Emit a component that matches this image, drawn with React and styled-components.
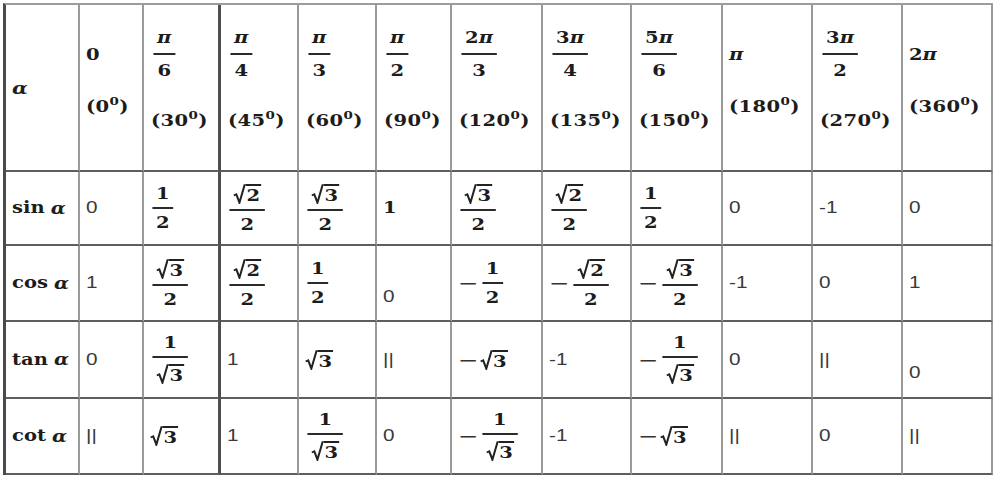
import React from 'react';
import styled, { createGlobalStyle } from 'styled-components';

const GlobalStyle = createGlobalStyle`
  html, body {
    margin: 0;
    padding: 0;
    background: #ffffff;
  }
`;

// column / row sizes measured off the printed table
const COLS = [74, 64, 77, 78, 78, 75, 91, 89, 91, 90, 90, 90];
const ROWS = [167, 74, 76, 77, 76];
const STRETCH = 1.22;

const Table = styled.div`
  display: grid;
  grid-template-columns: ${COLS.map(w => `${w}px`).join(' ')};
  grid-template-rows: ${ROWS.map(h => `${h}px`).join(' ')};
  width: max-content;
  margin: 3px 0 0 3px;
  border-top: 2px solid #9c9c9c;
  border-left: 3px solid #4a4a4a;
  background: #fff;
`;

const Cell = styled.div`
  display: flex;
  align-items: center;
  box-sizing: border-box;
  padding-left: 6px;
  padding-bottom: ${props => (props.$head ? 14 : 0)}px;
  border-right: ${props => (props.$heavy ? '3px solid #4f4f4f' : '2px solid #9a9a9a')};
  border-bottom: 2px solid #5e5e5e;
  color: #1e1e1e;
  overflow: visible;
`;

const Inner = styled.div`
  display: flex;
  flex-direction: ${props => (props.$stack ? 'column' : 'row')};
  align-items: ${props => (props.$stack ? 'flex-start' : 'center')};
  gap: ${props => (props.$stack ? '32px' : '0')};
  margin-top: ${props => (props.$shift || 0) * 2}px;
  margin-left: ${props => props.$indent || 0}px;
  transform: scaleX(${STRETCH});
  transform-origin: left center;
  white-space: nowrap;
`;

const Serif = styled.span`
  font-family: "DejaVu Serif", "Liberation Serif", serif;
  font-weight: bold;
  font-size: 16px;
  line-height: 20px;
  color: #1c1c1c;
`;

const Label = styled(Serif)`
  font-size: 16px;
`;

const Greek = styled.i`
  font-family: "DejaVu Serif", "Liberation Serif", serif;
  font-style: italic;
  font-weight: bold;
  font-size: ${props => props.$size || 16}px;
  margin-left: ${props => props.$gap || 0}px;
`;

const Sans = styled.span`
  font-family: "Liberation Sans", Arial, sans-serif;
  font-size: 17px;
  line-height: 20px;
  color: #3a3a3a;
`;

const Deg = styled(Serif)`
  font-size: 16px;
  letter-spacing: 0.3px;
`;

const Sup = styled.sup`
  font-size: 11px;
  line-height: 0;
  vertical-align: 7px;
`;

const FracBox = styled.span`
  display: inline-flex;
  flex-direction: column;
  align-items: stretch;
  margin: 0 2px;
  font-family: "DejaVu Serif", "Liberation Serif", serif;
  font-weight: bold;
  font-size: 16px;
  line-height: 16px;
  color: #1c1c1c;
`;

const Num = styled.span`
  display: flex;
  justify-content: center;
  padding: 0 3px ${props => (props.$loose ? 7 : 5)}px;
  border-bottom: 2px solid #2a2a2a;
`;

const Den = styled.span`
  display: flex;
  justify-content: center;
  padding: ${props => (props.$loose ? 8 : 6)}px 3px 0;
`;

const Minus = styled(Serif)`
  font-weight: normal;
  font-size: 20px;
  margin-right: 1px;
  color: #333;
`;

const SqrtBox = styled.span`
  display: inline-flex;
  align-items: flex-start;
  font-family: "DejaVu Serif", "Liberation Serif", serif;
  font-weight: bold;
  font-size: 16px;
  color: #1c1c1c;
`;

const Radicand = styled.span`
  line-height: 16px;
  padding: 2px 1px 0 1px;
  border-top: 2px solid #222;
`;

const RadicalSign = () => (
  <svg width="10" height="20" viewBox="0 0 10 20" style={{ display: 'block' }}>
    <path d="M0.6 11.4 L2.6 10.2 L5.2 18.6 L9.4 1 L10 1" fill="none" stroke="#222" strokeWidth="1.7" strokeLinejoin="miter" />
  </svg>
);

const Sqrt = ({ children }) => (
  <SqrtBox>
    <RadicalSign />
    <Radicand>{children}</Radicand>
  </SqrtBox>
);

const Frac = ({ num, den, loose }) => (
  <FracBox>
    <Num $loose={loose}>{num}</Num>
    <Den $loose={loose}>{den}</Den>
  </FracBox>
);

const Pi = ({ k }) => (
  <span>
    {k}
    <Greek>π</Greek>
  </span>
);

const degree = d => (
  <Deg>
    ({d}
    <Sup>0</Sup>)
  </Deg>
);

const HEAD = [
  { top: <Serif>0</Serif>, deg: '0', plain: true },
  { top: <Frac loose num={<Pi />} den="6" />, deg: '30' },
  { top: <Frac loose num={<Pi />} den="4" />, deg: '45' },
  { top: <Frac loose num={<Pi />} den="3" />, deg: '60' },
  { top: <Frac loose num={<Pi />} den="2" />, deg: '90' },
  { top: <Frac loose num={<Pi k="2" />} den="3" />, deg: '120' },
  { top: <Frac loose num={<Pi k="3" />} den="4" />, deg: '135' },
  { top: <Frac loose num={<Pi k="5" />} den="6" />, deg: '150' },
  { top: <Serif><Pi /></Serif>, deg: '180', plain: true },
  { top: <Frac loose num={<Pi k="3" />} den="2" />, deg: '270' },
  { top: <Serif><Pi k="2" /></Serif>, deg: '360', plain: true },
];

const half = <Frac num="1" den="2" />;
const root2half = <Frac num={<Sqrt>2</Sqrt>} den="2" />;
const root3half = <Frac num={<Sqrt>3</Sqrt>} den="2" />;
const invRoot3 = <Frac num="1" den={<Sqrt>3</Sqrt>} />;
const root3 = <Sqrt>3</Sqrt>;
const neg = node => (
  <>
    <Minus>−</Minus>
    {node}
  </>
);
const s = text => <Sans>{text}</Sans>;

const ROWS_DATA = [
  {
    fn: 'sin',
    cells: [s('0'), half, root2half, root3half, <Serif>1</Serif>, root3half, root2half, half, s('0'), s('-1'), s('0')],
  },
  {
    fn: 'cos',
    cells: [
      s('1'), root3half, root2half, half, { node: s('0'), shift: 14 },
      neg(half), neg(root2half), neg(root3half), s('-1'), s('0'), s('1'),
    ],
  },
  {
    fn: 'tan',
    cells: [
      s('0'), invRoot3, s('1'), root3, s('||'), neg(root3), s('-1'), neg(invRoot3),
      s('0'), s('||'), { node: s('0'), shift: 13 },
    ],
  },
  {
    fn: 'cot',
    cells: [s('||'), root3, s('1'), invRoot3, s('0'), neg(invRoot3), s('-1'), neg(root3), s('||'), s('0'), s('||')],
  },
];

// the third vertical rule of the print is heavier than the rest
const heavyAt = i => i === 2;

const TrigTable = () => (
  <Table>
    <Cell>
      <Inner>
        <Greek $size={17}>α</Greek>
      </Inner>
    </Cell>
    {HEAD.map((h, i) => (
      <Cell key={h.deg} $head $heavy={heavyAt(i + 1)}>
        <Inner $stack $indent={h.plain ? 0 : 1}>
          {h.top}
          {degree(h.deg)}
        </Inner>
      </Cell>
    ))}
    {ROWS_DATA.map(row => (
      <React.Fragment key={row.fn}>
        <Cell>
          <Inner>
            <Label>{row.fn}</Label>
            <Greek $gap={5}>α</Greek>
          </Inner>
        </Cell>
        {row.cells.map((c, i) => {
          const isObj = c && c.node;
          return (
            <Cell key={i} $heavy={heavyAt(i + 1)}>
              <Inner $shift={isObj ? c.shift : 0}>{isObj ? c.node : c}</Inner>
            </Cell>
          );
        })}
      </React.Fragment>
    ))}
  </Table>
);

const App = () => (
  <>
    <GlobalStyle />
    <TrigTable />
  </>
);

export default App;
